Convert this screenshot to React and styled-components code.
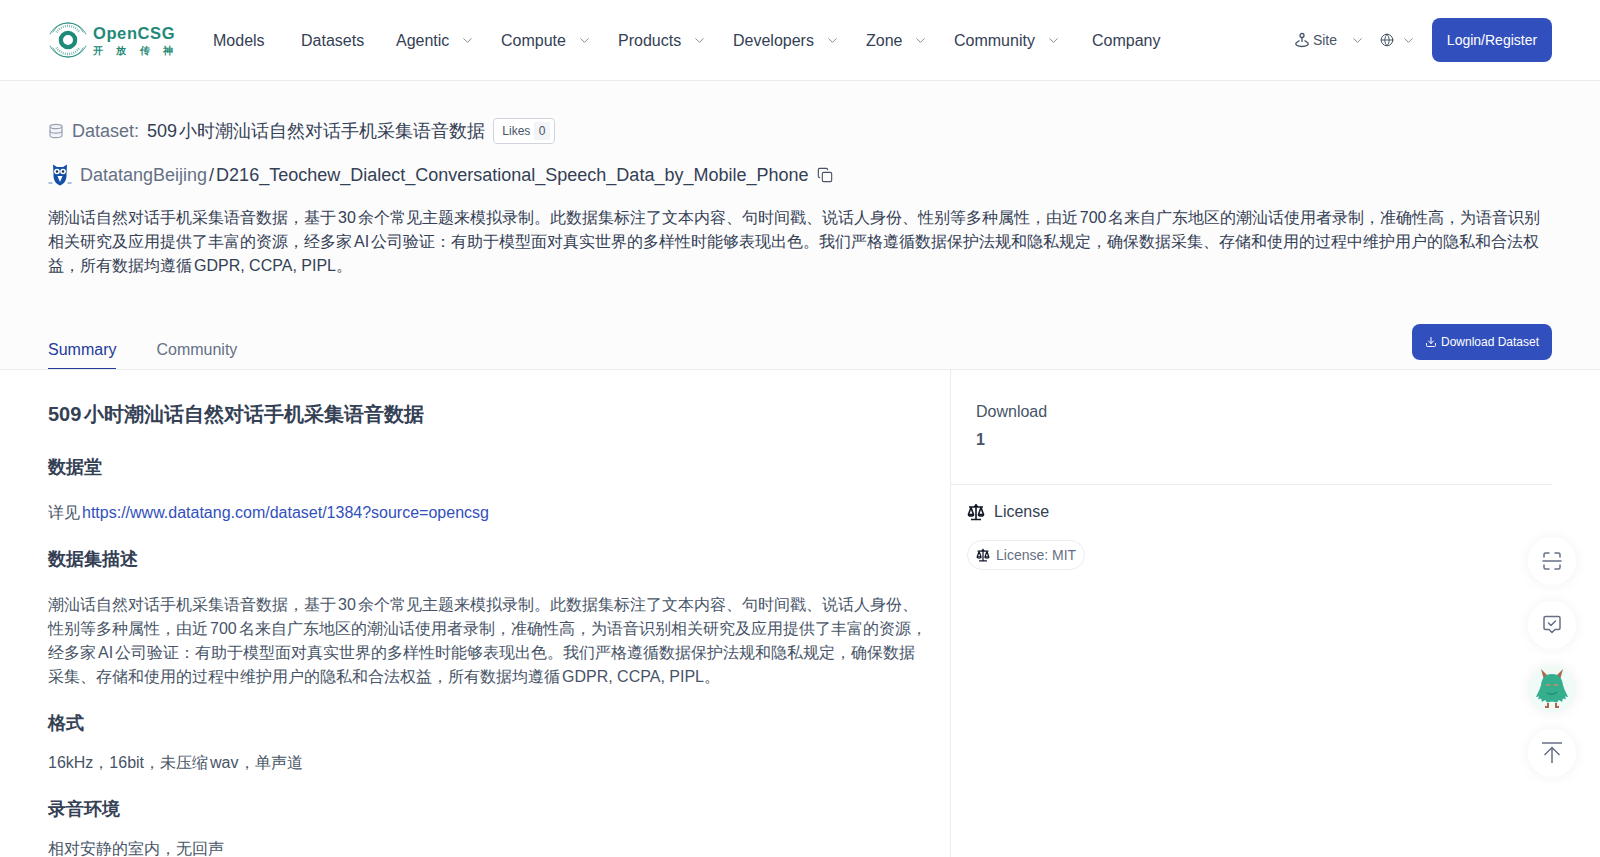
import React from 'react';
import styled, { createGlobalStyle } from 'styled-components';
import { ChevronDown, Copy, Download, Globe } from 'lucide-react';

const GlobalStyle = createGlobalStyle`
  * { box-sizing: border-box; }
  html, body { margin: 0; height: 100%; overflow: hidden; }
  body {
    background: #fff;
    color: #344054;
    font-family: "Liberation Sans", sans-serif;
    font-size: 16px;
    line-height: 24px;
    text-autospace: normal;
  }
  h1, h2, h3, p { margin: 0; }
`;

const navItems = [
  { label: 'Models', width: 88 },
  { label: 'Datasets', width: 95 },
  { label: 'Agentic', width: 105, menu: true },
  { label: 'Compute', width: 117, menu: true },
  { label: 'Products', width: 115, menu: true },
  { label: 'Developers', width: 133, menu: true },
  { label: 'Zone', width: 88, menu: true },
  { label: 'Community', width: 138, menu: true },
  { label: 'Company', width: 90 },
];

const summary = '潮汕话自然对话手机采集语音数据，基于30余个常见主题来模拟录制。此数据集标注了文本内容、句时间戳、说话人身份、性别等多种属性，由近700名来自广东地区的潮汕话使用者录制，准确性高，为语音识别相关研究及应用提供了丰富的资源，经多家AI公司验证：有助于模型面对真实世界的多样性时能够表现出色。我们严格遵循数据保护法规和隐私规定，确保数据采集、存储和使用的过程中维护用户的隐私和合法权益，所有数据均遵循GDPR, CCPA, PIPL。';

const LogoMark = () => (
  <svg width="40" height="42" viewBox="0 0 42 42" fill="none">
    <circle cx="21" cy="21" r="7.500" stroke="#1f8a78" strokeWidth="4.5" />
    <path d="M5 13a18 18 0 0 1 32 0" stroke="#1f8a78" strokeWidth="1" opacity=".8" />
    <path d="M2 15a21 21 0 0 1 38 0" stroke="#1f8a78" strokeWidth="1" opacity=".8" />
    <path d="M9 13a14 14 0 0 1 24 0" stroke="#1f8a78" strokeWidth="2.5" strokeDasharray="1 1.2" opacity=".6" />
    <path d="M5 29a18 18 0 0 0 32 0" stroke="#1f8a78" strokeWidth="1" opacity=".8" />
    <path d="M2 27a21 21 0 0 0 38 0" stroke="#1f8a78" strokeWidth="1" opacity=".8" />
    <path d="M9 29a14 14 0 0 0 24 0" stroke="#1f8a78" strokeWidth="2.5" strokeDasharray="1 1.2" opacity=".6" />
  </svg>
);

const SitePin = () => (
  <svg width="16" height="16" viewBox="0 0 16 16" fill="none" stroke="#475467" strokeWidth="1.300">
    <circle cx="8" cy="3.500" r="2" />
    <path d="M8 5.500V10" />
    <path d="M5.500 8.500L2 11c-1 1.500 1 3.500 6 3.500s7-2 6-3.500L10.500 8.500" />
  </svg>
);

const DatabaseIcon = () => (
  <svg width="16" height="16" viewBox="0 0 16 16" fill="#f2f4f7" stroke="#98a2b3" strokeWidth="1.200">
    <path d="M2 3.500c0-1.300 2.700-2.200 6-2.200s6 .9 6 2.200v9c0 1.300-2.700 2.200-6 2.200s-6-.9-6-2.200z" />
    <path d="M2 3.500c0 1.300 2.700 2.200 6 2.200s6-.9 6-2.200M2 8c0 1.300 2.700 2.200 6 2.200s6-.9 6-2.200" fill="none" />
  </svg>
);

const ScaleIcon = ({ size }) => (
  <svg width={size} height={size} viewBox="0 0 18 18" fill="none" stroke="#101828" strokeWidth="1.600" strokeLinejoin="round">
    <path d="M9 1V16M4 16.500h10M2 4h14M7 4l2-1.500L11 4" />
    <path d="M4 4.500L1.500 11.500h5zM14 4.500L11.500 11.500h5z" />
    <path d="M1.500 11.500c0 2 5 2 5 0M11.500 11.500c0 2 5 2 5 0" />
  </svg>
);

const OwlAvatar = () => (
  <svg width="24" height="24" viewBox="0 0 24 24">
    <circle cx="12" cy="12" r="12" fill="#fff" />
    <path d="M5 1.500l4 2.500h6l4-2.500-.5 9c.5 6-2 10.500-6.500 12-4.500-1.500-7-6-6.500-12z" fill="#1450a8" />
    <circle cx="9" cy="8.500" r="2.800" fill="#fff" />
    <circle cx="15" cy="8.500" r="2.800" fill="#fff" />
    <circle cx="9" cy="8.500" r="1.200" fill="#1a2a44" />
    <circle cx="15" cy="8.500" r="1.200" fill="#1a2a44" />
    <path d="M9.500 13h5l-2.500 6z" fill="#fff" />
    <path d="M.5 20h4M19.500 20h4" stroke="#1450a8" strokeWidth=".7" />
  </svg>
);

const ScanIcon = () => (
  <svg width="20" height="20" viewBox="0 0 20 20" fill="none" stroke="#667085" strokeWidth="1.500" strokeLinecap="round" strokeLinejoin="round">
    <path d="M2 6V3.500A1.500 1.500 0 0 1 3.500 2H7M13 2h3.500A1.500 1.500 0 0 1 18 3.500V6" />
    <path d="M1 10h18" />
    <path d="M2 14v2.500A1.500 1.500 0 0 0 3.500 18H7M13 18h3.500a1.500 1.500 0 0 0 1.500-1.500V14" />
  </svg>
);

const ChatCheckIcon = () => (
  <svg width="20" height="20" viewBox="0 0 20 20" fill="none" stroke="#667085" strokeWidth="1.500" strokeLinecap="round" strokeLinejoin="round">
    <path d="M3.500 1.500h13A1.500 1.500 0 0 1 18 3v10a1.500 1.500 0 0 1-1.500 1.500H13l-3 3-3-3H3.500A1.500 1.500 0 0 1 2 13V3a1.500 1.500 0 0 1 1.500-1.500z" />
    <path d="M6.500 8l2.500 2.500 4.500-4.500" />
  </svg>
);

const TopIcon = () => (
  <svg width="22" height="22" viewBox="0 0 22 22" fill="none" stroke="#667085" strokeWidth="1.500">
    <path d="M1 1h20" />
    <path d="M11 21V6M3.500 13L11 5.500 18.500 13" />
  </svg>
);

const Monster = () => (
  <svg width="36" height="42" viewBox="0 0 36 42">
    <path d="M10 12L7 1l7 7zM26 12l3-11-7 7z" fill="#a8694f" />
    <path d="M14 35v4h-3M22 35v4h3" stroke="#b0654c" strokeWidth="2" fill="none" />
    <path d="M18 6c7 0 10 4 11 11 1 5 4 9 5 12l-3-.5 1 3-3-1-1 3.500-3-2-2 2.500-5-1-5 1-2-2.500-3 2-1-3.500-3 1 1-3-3 .5c1-3 4-7 5-12C8 10 11 6 18 6z" fill="#35ae8d" />
    <path d="M12 17h4.500M19.500 17H24" stroke="#c98a6c" strokeWidth="1.600" />
    <path d="M13 25c3 1.500 7 1.500 10-1" stroke="#238a6f" strokeWidth="1.200" fill="none" />
  </svg>
);

const App = () => (
  <Page>
    <GlobalStyle />
    <Header>
      <Logo>
        <LogoMark />
        <LogoText>
          <LogoName>OpenCSG</LogoName>
          <LogoSlogan><span>开</span><span>放</span><span>传</span><span>神</span></LogoSlogan>
        </LogoText>
      </Logo>
      <Nav>
        {navItems.map((item) => (
          <NavItem key={item.label} $width={item.width}>
            {item.label}
            {item.menu && <NavChevron size={15} strokeWidth={1.500} />}
          </NavItem>
        ))}
      </Nav>
      <HeaderRight>
        <SiteButton>
          <SitePin />
          Site
          <NavChevron size={15} strokeWidth={1.500} $gap={10} />
        </SiteButton>
        <LangButton>
          <Globe size={14} strokeWidth={1.700} color="#475467" />
          <NavChevron size={15} strokeWidth={1.500} $gap={7} />
        </LangButton>
        <LoginButton>Login/Register</LoginButton>
      </HeaderRight>
    </Header>

    <Hero>
      <TitleRow>
        <DatabaseIcon />
        <TitleLabel>Dataset:</TitleLabel>
        <TitleText>509小时潮汕话自然对话手机采集语音数据</TitleText>
        <Likes>Likes<LikesCount>0</LikesCount></Likes>
      </TitleRow>
      <OwnerRow>
        <OwlAvatar />
        <OwnerName>DatatangBeijing</OwnerName>
        <Slash>/</Slash>
        <RepoName>D216_Teochew_Dialect_Conversational_Speech_Data_by_Mobile_Phone</RepoName>
        <Copy size={16} strokeWidth={1.700} color="#475467" />
      </OwnerRow>
      <HeroDesc>{summary}</HeroDesc>
      <TabBar>
        <Tabs>
          <Tab $active>Summary</Tab>
          <Tab>Community</Tab>
        </Tabs>
        <DownloadButton><Download size={12} />Download Dataset</DownloadButton>
      </TabBar>
    </Hero>

    <Main>
      <Article>
        <ArticleTitle>509小时潮汕话自然对话手机采集语音数据</ArticleTitle>
        <SectionTitle>数据堂</SectionTitle>
        <Para>详见<DocLink>https://www.datatang.com/dataset/1384?source=opencsg</DocLink></Para>
        <SectionTitle>数据集描述</SectionTitle>
        <Para>{summary}</Para>
        <SectionTitle>格式</SectionTitle>
        <Para $tight>16kHz，16bit，未压缩wav，单声道</Para>
        <SectionTitle>录音环境</SectionTitle>
        <Para $tight>相对安静的室内，无回声</Para>
      </Article>
      <Side>
        <DownloadStat>
          <StatLabel>Download</StatLabel>
          <StatValue>1</StatValue>
        </DownloadStat>
        <LicenseBlock>
          <LicenseTitle><ScaleIcon size={18} />License</LicenseTitle>
          <LicenseTag><ScaleIcon size={14} />License: MIT</LicenseTag>
        </LicenseBlock>
      </Side>
    </Main>

    <FloatingBar>
      <FloatButton><ScanIcon /></FloatButton>
      <FloatButton><ChatCheckIcon /></FloatButton>
      <FloatButton $mint><Monster /></FloatButton>
      <FloatButton><TopIcon /></FloatButton>
    </FloatingBar>
  </Page>
);

const Page = styled.div`
  height: 100vh;
  overflow: hidden;
`;

const Header = styled.header`
  height: 81px;
  display: flex;
  align-items: center;
  padding: 0 48px;
  background: #fff;
  border-bottom: 1px solid #eaecf0;
`;

const Logo = styled.div`
  display: flex;
  align-items: center;
  gap: 5px;
  width: 165px;
`;

const LogoText = styled.div`
  display: flex;
  flex-direction: column;
  width: 80px;
  color: #1f8a78;
`;

const LogoName = styled.div`
  font-size: 16.500px;
  line-height: 22px;
  font-weight: 700;
  letter-spacing: 0.6px;
  white-space: nowrap;
`;

const LogoSlogan = styled.div`
  display: flex;
  justify-content: space-between;
  font-size: 10px;
  line-height: 14px;
  font-weight: 700;
`;

const Nav = styled.nav`
  display: flex;
  align-items: center;
  padding-top: 1px;
`;

const NavItem = styled.div`
  width: ${(p) => p.$width}px;
  display: flex;
  align-items: center;
  color: #344054;
  font-size: 16px;
  white-space: nowrap;
`;

const NavChevron = styled(ChevronDown)`
  margin-left: ${(p) => p.$gap ?? 11}px;
  color: #7a8494;
`;

const HeaderRight = styled.div`
  margin-left: auto;
  display: flex;
  align-items: center;
`;

const SiteButton = styled.div`
  display: flex;
  align-items: center;
  gap: 3px;
  font-size: 14px;
  color: #475467;
  margin-right: 15px;
`;

const LangButton = styled.div`
  display: flex;
  align-items: center;
  margin-right: 16px;
`;

const LoginButton = styled.button`
  width: 120px;
  height: 44px;
  border: none;
  border-radius: 8px;
  background: #3250bd;
  color: #fff;
  font: inherit;
  font-size: 14px;
`;

const Hero = styled.section`
  background: #fcfcfd;
  padding: 37px 48px 0;
  border-bottom: 1px solid #eaecf0;
`;

const TitleRow = styled.div`
  display: flex;
  align-items: center;
  height: 26px;
`;

const TitleLabel = styled.span`
  margin-left: 8px;
  font-size: 18px;
  color: #667085;
`;

const TitleText = styled.h1`
  margin-left: 8px;
  font-size: 18px;
  font-weight: 400;
  color: #344054;
`;

const Likes = styled.div`
  margin-left: 8px;
  height: 26px;
  padding: 0 4px 0 8px;
  display: flex;
  align-items: center;
  gap: 4px;
  border: 1px solid #d0d5dd;
  border-radius: 4px;
  background: #fff;
  font-size: 12px;
  color: #475467;
`;

const LikesCount = styled.span`
  background: #f2f4f7;
  padding: 0 4.500px;
  line-height: 18px;
`;

const OwnerRow = styled.div`
  display: flex;
  align-items: center;
  height: 28px;
  margin-top: 17px;
  font-size: 18px;
`;

const OwnerName = styled.span`
  margin-left: 8px;
  color: #667085;
`;

const Slash = styled.span`
  margin: 0 2px;
  color: #344054;
`;

const RepoName = styled.span`
  margin-right: 8px;
  color: #344054;
`;

const HeroDesc = styled.p`
  margin-top: 17px;
  color: #344054;
`;

const TabBar = styled.div`
  margin-top: 46px;
  height: 45px;
  display: flex;
  justify-content: space-between;
  align-items: flex-start;
`;

const Tabs = styled.div`
  display: flex;
  gap: 40px;
  padding-top: 9px;
`;

const Tab = styled.div`
  height: 36px;
  padding-top: 5px;
  color: ${(p) => (p.$active ? '#223b99' : '#667085')};
  border-bottom: ${(p) => (p.$active ? '1px solid #223b99' : 'none')};
`;

const DownloadButton = styled.button`
  width: 140px;
  height: 36px;
  display: flex;
  align-items: center;
  justify-content: center;
  gap: 4px;
  border: none;
  border-radius: 8px;
  background: #3250bd;
  color: #fff;
  font: inherit;
  font-size: 12px;
`;

const Main = styled.main`
  display: flex;
  padding: 0 48px;
`;

const Article = styled.article`
  width: 903px;
  padding: 29px 22px 0 0;
  border-right: 1px solid #eaecf0;
`;

const ArticleTitle = styled.h1`
  font-size: 20px;
  line-height: 30px;
  font-weight: 700;
  color: #344054;
`;

const SectionTitle = styled.h3`
  margin-top: 24px;
  font-size: 18px;
  line-height: 28px;
  font-weight: 700;
  color: #344054;
`;

const Para = styled.p`
  margin-top: ${(p) => (p.$tight ? 14 : 20)}px;
  margin-bottom: -4px;
  color: #475467;
`;

const DocLink = styled.a`
  color: #3250bd;
`;

const Side = styled.aside`
  flex: 1;
  min-width: 0;
`;

const DownloadStat = styled.div`
  padding: 30px 25px 0;
  height: 115px;
  border-bottom: 1px solid #eaecf0;
`;

const StatLabel = styled.div`
  color: #475467;
`;

const StatValue = styled.div`
  margin-top: 4px;
  font-weight: 700;
  color: #475467;
`;

const LicenseBlock = styled.div`
  padding: 15px 16px;
`;

const LicenseTitle = styled.div`
  display: flex;
  align-items: center;
  gap: 9px;
  color: #344054;
`;

const LicenseTag = styled.div`
  margin-top: 16px;
  display: inline-flex;
  align-items: center;
  gap: 6px;
  height: 30px;
  padding: 0 8px;
  border: 1px solid #eaecf0;
  border-radius: 15px;
  background: #fff;
  font-size: 14px;
  color: #667085;
`;

const FloatingBar = styled.div`
  position: fixed;
  right: 24px;
  top: 537px;
  display: flex;
  flex-direction: column;
  gap: 16px;
`;

const FloatButton = styled.button`
  width: 48px;
  height: 48px;
  padding: 0;
  display: flex;
  align-items: center;
  justify-content: center;
  border: none;
  border-radius: 50%;
  background: ${(p) => (p.$mint ? '#f0faf6' : '#fff')};
  color: #667085;
  box-shadow: 0 0 14px rgba(16, 24, 40, 0.06);
`;

export default App;
